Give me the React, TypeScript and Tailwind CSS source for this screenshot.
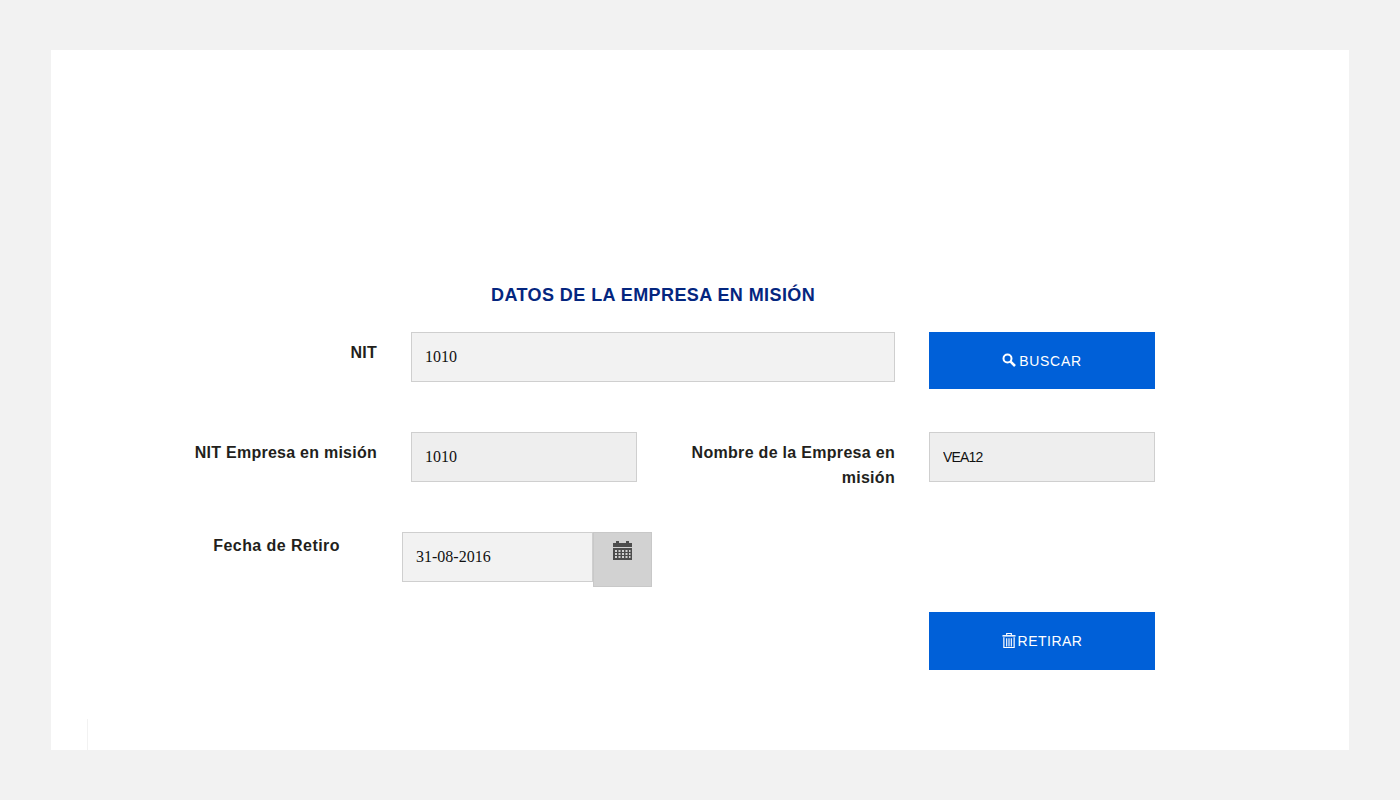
function SearchIcon() {
  return (
    <svg width="14" height="14" viewBox="0 0 14 14" fill="none" stroke="currentColor" className="-mt-[3px] shrink-0">
      <circle cx="5.5" cy="5.5" r="4" strokeWidth="2" />
      <path d="M8.6 8.6L13 13" strokeWidth="2.6" />
    </svg>
  );
}

function TrashIcon() {
  return (
    <svg width="14" height="17" viewBox="0 0 15 17" fill="none" stroke="currentColor" className="-mt-[1px] shrink-0">
      <path d="M0.5 3.5H14.5" strokeWidth="1.6" />
      <path d="M5 3V1H10V3" strokeWidth="1.2" />
      <path d="M2 5V16H13V5" strokeWidth="1.3" />
      <path d="M5 6V15M7.5 6V15M10 6V15" strokeWidth="1.2" />
    </svg>
  );
}

function CalendarIcon() {
  return (
    <svg width="19" height="21" viewBox="0 0 19 21" className="shrink-0 fill-[#4d4d4d]">
      <path d="M0 3H3V1H6V3H13V1H16V3H19V7H0Z" />
      <path d="M0 8H19V20H0ZM2 10V12H4V10ZM5.5 10V12H7.5V10ZM9 10V12H11V10ZM12.5 10V12H14.5V10ZM16 10V12H17.5V10ZM2 13V15H4V13ZM5.5 13V15H7.5V13ZM9 13V15H11V13ZM12.5 13V15H14.5V13ZM16 13V15H17.5V13ZM2 16V18H4V16ZM5.5 16V18H7.5V16ZM9 16V18H11V16ZM12.5 16V18H14.5V16ZM16 16V18H17.5V16Z" fillRule="evenodd" />
    </svg>
  );
}

const labelCls = "text-right text-[16px] leading-[25px] font-bold text-[#231f1c]";
const inputCls = "h-[50px] border border-[#cfcfcf] px-[13px] text-[#111] outline-none";
const serifCls = "text-[16px] font-['Liberation_Serif',serif]";
const btnCls = "flex w-[226px] items-center justify-center bg-[#0060d8] text-[14px] text-white";

export default function App() {
  return (
    <div className="min-h-screen bg-[#f2f2f2] px-[51px] py-[50px] font-['Liberation_Sans',Arial,sans-serif]">
      <div className="flex h-[700px] flex-col bg-white pt-[233px] pl-[129px]">
        <h1 className="ml-[311px] text-[18px] leading-[25px] font-bold tracking-[0.42px] whitespace-nowrap text-[#04267f]">
          DATOS DE LA EMPRESA EN MISIÓN
        </h1>

        <div className="mt-[24px] flex items-start">
          <label className={`${labelCls} mt-[8px] w-[197px] tracking-[0.25px]`}>NIT</label>
          <input readOnly value="1010" className={`${inputCls} ${serifCls} ml-[34px] w-[484px] bg-[#f2f2f2]`} />
          <button className={`${btnCls} ml-[34px] h-[57px] gap-[3px] pt-px tracking-[0.7px]`}>
            <SearchIcon />
            BUSCAR
          </button>
        </div>

        <div className="mt-[43px] flex items-start">
          <label className={`${labelCls} mt-[8px] w-[197px] tracking-[0.25px]`}>NIT Empresa en misión</label>
          <input readOnly value="1010" className={`${inputCls} ${serifCls} ml-[34px] w-[226px] bg-[#eeeeee]`} />
          <label className={`${labelCls} mt-[8px] w-[258px] tracking-[0.3px]`}>Nombre de la Empresa en misión</label>
          <input readOnly value="VEA12" className={`${inputCls} ml-[34px] w-[226px] bg-[#eeeeee] text-[14px] tracking-[-0.8px]`} />
        </div>

        <div className="mt-[42px] flex items-start">
          <label className={`${labelCls} mt-px w-[160px] tracking-[0.45px]`}>Fecha de Retiro</label>
          <input readOnly value="31-08-2016" className={`${inputCls} ${serifCls} ml-[62px] w-[191px] bg-[#f2f2f2]`} />
          <div className="flex h-[55px] w-[59px] justify-center border border-[#c8c8c8] bg-[#d2d2d2] pt-[7px]">
            <CalendarIcon />
          </div>
        </div>

        <div className="mt-[25px] flex justify-start">
          <button className={`${btnCls} ml-[749px] h-[58px] gap-[2px] tracking-[0.5px]`}>
            <TrashIcon />
            RETIRAR
          </button>
        </div>

        <div className="mt-auto -ml-[93px] h-[31px] w-px bg-[#f2f2f2]" />
      </div>
    </div>
  );
}
